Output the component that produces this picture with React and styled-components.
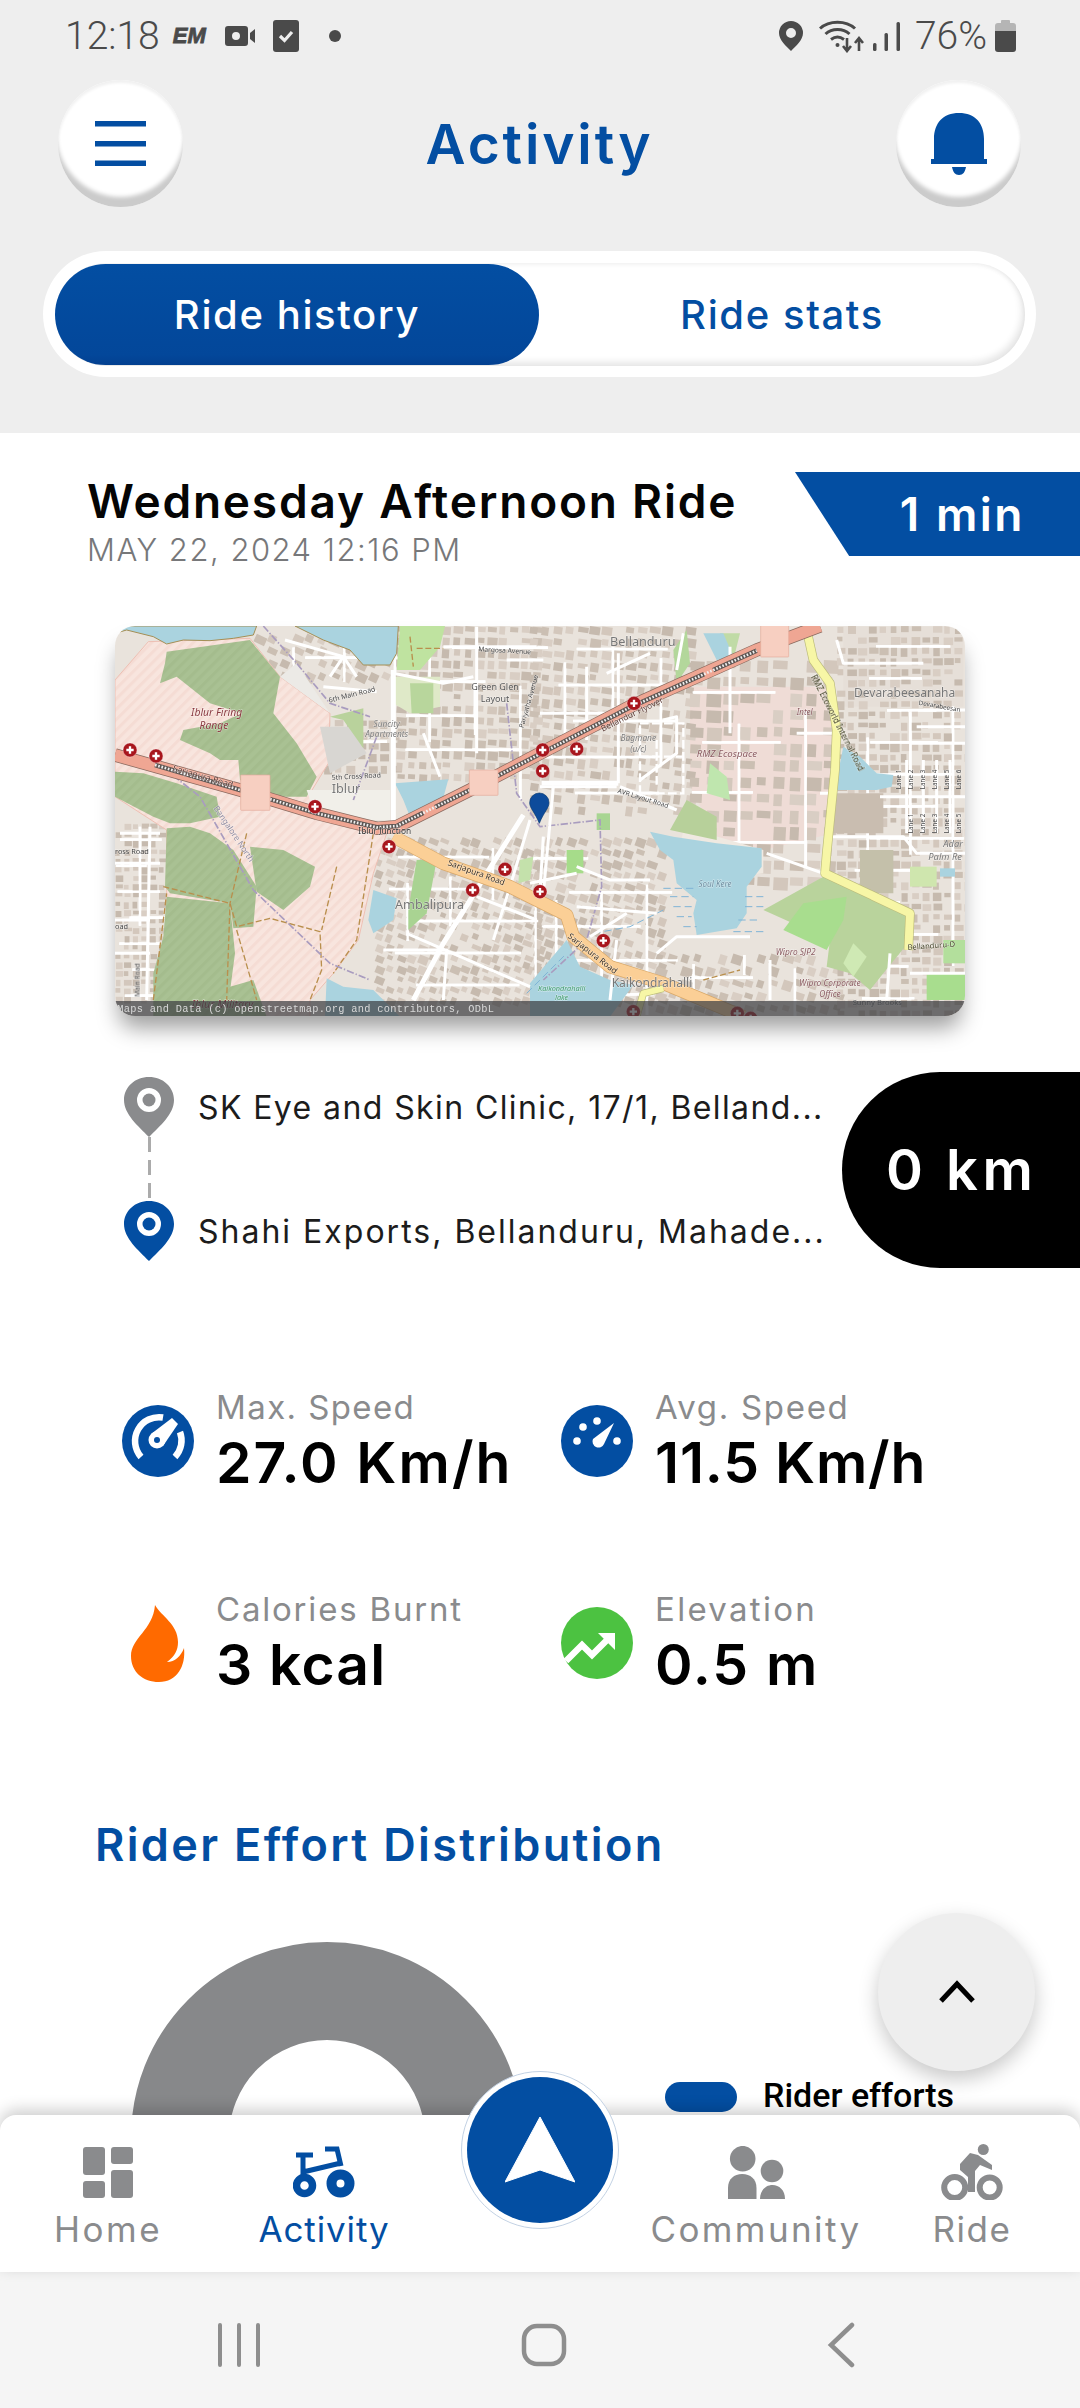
import React from 'react';
import styled, { createGlobalStyle } from 'styled-components';

const BLUE = '#034ea2';
const GREY = '#8a8b8d';
const FONT = 'Inter, "Noto Sans", sans-serif';

const GlobalStyle = createGlobalStyle`
  html, body { margin: 0; padding: 0; background: #fff; }
  * { box-sizing: border-box; }
`;

const Page = styled.div`
  position: relative;
  width: 1080px;
  height: 2408px;
  display: flex;
  flex-direction: column;
  overflow: hidden;
  font-family: ${FONT};
  background: #fff;
`;

const Top = styled.header`
  height: 433px;
  flex: none;
  background: #eee;
`;

const StatusBar = styled.div`
  height: 72px;
  display: flex;
  align-items: center;
  justify-content: space-between;
  padding: 0 64px 0 65px;
  color: #4a4a4a;
`;

const StatusGroup = styled.div`
  display: flex;
  align-items: center;
`;

const StatusItem = styled.span`
  display: flex;
  align-items: center;
  margin-left: ${p => p.$ml || 0}px;
`;

const StatusText = styled.span`
  font-family: Roboto, sans-serif;
  font-size: 39px;
  font-weight: 300;
  line-height: 40px;
`;

const EmMark = styled.span`
  font-family: "Liberation Sans", sans-serif;
  font-size: 22px;
  font-weight: 700;
  font-style: italic;
  width: 39px;
  -webkit-text-stroke: 0.8px #4a4a4a;
`;

const HeaderRow = styled.div`
  margin-top: 8px;
  height: 127px;
  padding: 0 59px 0 58px;
  display: flex;
  align-items: center;
  justify-content: space-between;
`;

const RoundButton = styled.button`
  width: 125px;
  height: 127px;
  border: 0;
  padding: 0;
  border-radius: 50%;
  background: #fff;
  display: flex;
  align-items: center;
  justify-content: center;
  box-shadow: inset 0 -12px 4px -2px #cbcbcb, inset 0 3px 3px #f1f1f1;
`;

const PageTitle = styled.h1`
  margin: 0;
  font-size: 55px;
  font-weight: 600;
  letter-spacing: 2.9px;
  line-height: 64px;
  color: ${BLUE};
`;

const Tabs = styled.div`
  margin: 44px 0 0 43px;
  width: 993px;
  height: 126px;
  padding: 12px 11px 11px 12px;
  border-radius: 63px;
  background: #fff;
`;

const TabTrack = styled.div`
  height: 103px;
  display: flex;
  border-radius: 52px;
  background: #fff;
  box-shadow: inset -3px -4px 7px rgba(0,0,0,.1), inset 0 2px 4px rgba(0,0,0,.05);
`;

const Tab = styled.div`
  width: ${p => (p.$active ? 484 : 486)}px;
  height: ${p => (p.$active ? 101 : 103)}px;
  margin-top: ${p => (p.$active ? 1 : 0)}px;
  display: flex;
  align-items: center;
  justify-content: center;
  border-radius: 51px;
  font-size: 40px;
  font-weight: 450;
  letter-spacing: 1.6px;
  color: ${p => (p.$active ? '#fff' : BLUE)};
  background: ${p => (p.$active ? 'linear-gradient(#034ea2, #03479a 90%, #034090)' : 'transparent')};
`;

const Main = styled.main`
  position: relative;
  flex: 1;
  min-height: 0;
  overflow: hidden;
  padding-top: 39px;
`;

const RideHead = styled.div`
  height: 84px;
  display: flex;
  justify-content: space-between;
`;

const RideText = styled.div`
  padding: 3px 0 0 87px;
`;

const RideName = styled.div`
  font-size: 46px;
  font-weight: 600;
  line-height: 52px;
  letter-spacing: 1.8px;
  color: #050505;
  white-space: nowrap;
`;

const RideDate = styled.div`
  margin-top: 3px;
  font-size: 31px;
  font-weight: 300;
  line-height: 40px;
  letter-spacing: 1.5px;
  color: #77787a;
  white-space: nowrap;
`;

const Duration = styled.div`
  width: 285px;
  height: 84px;
  padding-right: 55px;
  display: flex;
  align-items: center;
  justify-content: flex-end;
  background: ${BLUE};
  clip-path: polygon(0 0, 100% 0, 100% 100%, 19% 100%);
  color: #fff;
  font-size: 46px;
  font-weight: 600;
  letter-spacing: 2.5px;
`;

const MapFrame = styled.div`
  margin: 70px 0 0 115px;
  width: 850px;
  height: 390px;
  border-radius: 20px;
  box-shadow: 0 16px 22px -4px rgba(0,0,0,.38);
`;

const MapSvg = styled.svg`
  display: block;
  width: 100%;
  height: 100%;
  border-radius: 20px;
  font-family: "Noto Sans", sans-serif;
`;

const RouteRow = styled.div`
  margin-top: 56px;
  height: 196px;
  display: flex;
  justify-content: space-between;
`;

const Stops = styled.div`
  padding: 5px 0 0 124px;
`;

const Stop = styled.div`
  display: flex;
  align-items: center;
  gap: 24px;
  height: 60px;
`;

const StopText = styled.span`
  font-size: 32px;
  font-weight: 400;
  letter-spacing: ${p => p.$ls}px;
  color: #1c1c1c;
  white-space: nowrap;
`;

const StopDash = styled.div`
  height: 64px;
  margin-left: 24px;
  width: 3px;
  background: repeating-linear-gradient(to bottom, #ababab 0 15px, transparent 15px 23px);
`;

const Distance = styled.div`
  width: 238px;
  height: 196px;
  padding-left: 44px;
  display: flex;
  align-items: center;
  border-radius: 98px 0 0 98px;
  background: #000;
  color: #fff;
  font-size: 56px;
  font-weight: 600;
  letter-spacing: 4.5px;
`;

const Stats = styled.div`
  margin-top: 118px;
  padding-left: 122px;
  display: grid;
  grid-template-columns: 439px 1fr;
  row-gap: 92px;
`;

const Stat = styled.div`
  height: 110px;
  display: flex;
  align-items: center;
  gap: 22px;
`;

const StatIcon = styled.svg`
  width: 72px;
  height: 80px;
  flex: none;
`;

const StatBody = styled.div`
  margin-top: -2px;
`;

const StatLabel = styled.div`
  font-size: 33px;
  font-weight: 400;
  line-height: 44px;
  letter-spacing: ${p => p.$ls}px;
  color: ${GREY};
`;

const StatValue = styled.div`
  margin-top: 2px;
  font-size: 57px;
  font-weight: 600;
  line-height: 64px;
  letter-spacing: ${p => p.$ls}px;
  color: #000;
  white-space: nowrap;
`;

const SectionTitle = styled.h2`
  margin: 119px 0 0;
  padding-left: 95px;
  font-size: 45px;
  font-weight: 600;
  line-height: 56px;
  letter-spacing: 2.35px;
  color: ${BLUE};
`;

const ChartRow = styled.div`
  margin-top: 69px;
  padding-left: 131px;
  display: flex;
  align-items: flex-start;
`;

const Donut = styled.svg`
  width: 392px;
  height: 392px;
  flex: none;
`;

const Legend = styled.div`
  margin: 139px 0 0 142px;
  display: flex;
  align-items: center;
  gap: 26px;
`;

const LegendSwatch = styled.span`
  width: 72px;
  height: 30px;
  border-radius: 15px;
  background: ${BLUE};
`;

const LegendText = styled.span`
  font-family: Roboto, sans-serif;
  font-size: 34px;
  font-weight: 500;
  line-height: 34px;
  margin-top: -3px;
  color: #000;
  white-space: nowrap;
`;

const ScrollTop = styled.button`
  position: absolute;
  right: 45px;
  bottom: 44px;
  width: 157px;
  height: 158px;
  border: 0;
  padding: 0;
  border-radius: 50%;
  background: #eee;
  display: flex;
  align-items: center;
  justify-content: center;
  box-shadow: 0 8px 20px rgba(0,0,0,.22);
`;

const Nav = styled.nav`
  position: relative;
  z-index: 2;
  flex: none;
  height: 157px;
  display: grid;
  grid-template-columns: repeat(5, 216px);
  background: #fff;
  border-radius: 16px 16px 0 0;
  box-shadow: 0 -5px 16px rgba(0,0,0,.2);
`;

const NavItem = styled.div`
  padding-top: 29px;
  display: flex;
  flex-direction: column;
  align-items: center;
  color: ${p => (p.$active ? BLUE : GREY)};
`;

const NavIcon = styled.div`
  height: 56px;
  display: flex;
  align-items: center;
  justify-content: center;
`;

const NavLabel = styled.span`
  margin-top: 9px;
  font-size: 35px;
  font-weight: 400;
  line-height: 40px;
  letter-spacing: ${p => p.$ls}px;
`;

const GoButton = styled.div`
  position: absolute;
  top: -44px;
  left: 461px;
  width: 158px;
  height: 158px;
  padding: 5px;
  border-radius: 50%;
  background: #fff;
  border: 1px solid #c3d2e4;
  display: flex;
`;

const GoDisc = styled.div`
  flex: 1;
  border-radius: 50%;
  background: ${BLUE};
  display: flex;
  align-items: center;
  justify-content: center;
`;

const SystemNav = styled.div`
  flex: none;
  height: 136px;
  padding: 10px 8px 0 0;
  display: flex;
  align-items: center;
  justify-content: center;
  gap: 260px;
  background: #f5f5f5;
`;

// ---- status bar drawings ----
const VideoGlyph = () => (
  <svg width="30" height="20" viewBox="0 0 30 20">
    <path fill="#4a4a4a" fillRule="evenodd" d="M3 0h17a3 3 0 0 1 3 3v14a3 3 0 0 1-3 3H3a3 3 0 0 1-3-3V3a3 3 0 0 1 3-3zm8 6a4 4 0 1 0 0 8 4 4 0 0 0 0-8z" />
    <path fill="#4a4a4a" d="M25 7l5-4v14l-5-4z" />
  </svg>
);

const CheckGlyph = () => (
  <svg width="26" height="32" viewBox="0 0 26 32">
    <rect width="26" height="32" rx="3" fill="#4a4a4a" />
    <path d="M7 16l4.500 4.500L19 12" fill="none" stroke="#eee" strokeWidth="3.200" />
  </svg>
);

const DotGlyph = () => (
  <svg width="12" height="12" viewBox="0 0 12 12"><circle cx="6" cy="6" r="6" fill="#4a4a4a" /></svg>
);

const PinGlyph = () => (
  <svg width="24" height="30" viewBox="0 0 24 30">
    <path fill="#4a4a4a" fillRule="evenodd" d="M12 0a12 12 0 0 1 12 12c0 7-7 13-12 18C7 25 0 19 0 12A12 12 0 0 1 12 0zm0 7a5 5 0 1 0 0 10 5 5 0 0 0 0-10z" />
  </svg>
);

const WifiGlyph = () => (
  <svg width="45" height="33" viewBox="0 0 45 33" fill="none" stroke="#4a4a4a">
    <path d="M1 8.500C10 0 27 0 36 8.500" strokeWidth="3" />
    <path d="M6.500 14C13 8 24 8 30.500 14" strokeWidth="3" />
    <path d="M12 19.500c4-3 9-3 13 0" strokeWidth="3" />
    <circle cx="18.500" cy="25" r="2" fill="#4a4a4a" stroke="none" />
    <path d="M28 18v12M24 26l4 5 4-5" strokeWidth="2.600" />
    <path d="M40 31V19M36 23l4-5 4 5" strokeWidth="2.600" />
  </svg>
);

const SignalGlyph = () => (
  <svg width="27" height="29" viewBox="0 0 27 29" fill="#4a4a4a">
    <rect x="0" y="21" width="3.500" height="8" rx="1.500" />
    <rect x="11.500" y="11" width="3.500" height="18" rx="1.500" />
    <rect x="23.500" y="0" width="3.500" height="29" rx="1.500" />
  </svg>
);

const BatteryGlyph = () => (
  <svg width="21" height="32" viewBox="0 0 21 32">
    <path fill="#b5b5b5" d="M7 0h7a1 1 0 0 1 1 1v2h3a3 3 0 0 1 3 3v8H0V6a3 3 0 0 1 3-3h3V1a1 1 0 0 1 1-1z" />
    <path fill="#4a4a4a" d="M0 11h21v18a3 3 0 0 1-3 3H3a3 3 0 0 1-3-3z" />
  </svg>
);

const BellGlyph = () => (
  <svg width="56" height="62" viewBox="0 0 56 62" fill={BLUE}>
    <path d="M3 46V26C3 10 12 0 28 0s25 10 25 26v20h3v5H0v-5z" />
    <path d="M21 54h14c-1 5-3 8-7 8s-6-3-7-8z" />
  </svg>
);

const MenuGlyph = () => (
  <svg width="51" height="45" viewBox="0 0 51 45" fill={BLUE}>
    <rect width="51" height="5.500" />
    <rect y="20" width="51" height="5.500" />
    <rect y="39.500" width="51" height="5.500" />
  </svg>
);

// ---- map (an OSM raster in the reference, redrawn as a drawing) ----
function seeded(seed) {
  let s = seed;
  return () => {
    s = (s * 16807) % 2147483647;
    return s / 2147483647;
  };
}

const BLOCKS = [
  [15, 610, 165, 1140, 26, 0],
  [440, 40, 860, 190, 38, 25],
  [640, 300, 860, 460, 34, 0],
  [860, 18, 1300, 470, 34, 4],
  [800, 650, 1290, 1140, 32, 22],
  [1260, 18, 1740, 560, 36, 8],
  [1240, 650, 1660, 1140, 34, 20],
  [1740, 120, 2170, 800, 50, 3],
  [1640, 1000, 2180, 1188, 38, 18],
  [2180, 18, 2565, 1188, 32, 0],
];

const rnd = seeded(4711);

const BUILDINGS = [];
const BLOCK_STREETS = [];
BLOCKS.forEach(([x0, y0, x1, y1, step, angle]) => {
  const tones = ['#d3c7bc', '#cbbfb3', '#d9cec4', '#c6baae'];
  let row = 0;
  for (let y = y0; y < y1; y += step) {
    if (row % 3 === 2) {
      const from = x0 + rnd() * (x1 - x0) * 0.4;
      BLOCK_STREETS.push(`M${from} ${y - 3}H${from + (x1 - x0) * (0.35 + rnd() * 0.5)}`);
    }
    for (let x = x0; x < x1; x += step) {
      if (rnd() < 0.1) continue;
      const w = step * (0.5 + rnd() * 0.42);
      const h = step * (0.4 + rnd() * 0.42);
      BUILDINGS.push({ x: x + rnd() * 3, y: y + rnd() * 3, w, h, angle, fill: tones[Math.floor(rnd() * tones.length)] });
    }
    row += 1;
  }
  for (let x = x0 + step * 3; x < x1; x += step * 4) {
    const from = y0 + rnd() * (y1 - y0) * 0.4;
    BLOCK_STREETS.push(`M${x - 3} ${from}V${from + (y1 - y0) * (0.3 + rnd() * 0.5)}`);
  }
});

// thin white streets, in coordinates of the map at 3x
const STREETS = [
  'M850 150V620', 'M850 160L1000 190L1090 170', 'M1000 80H1280', 'M1100 20V400', 'M1190 120H1300',
  'M940 340L990 470', 'M640 200L800 215', 'M525 60L700 110L740 170', 'M700 110L660 170',
  'M1240 585L1130 760L1000 970L910 1140', 'M1260 600L1200 800L1150 960', 'M890 940L1120 1040L1260 1100',
  'M820 990H1010L1000 1140', 'M1300 650L1290 815', 'M1100 830L1280 900',
  'M30 640H150', 'M15 730H150', 'M15 900H120', 'M15 1000H120', 'M120 620L110 1140',
  'M1290 500H1520', 'M1525 100V490', 'M1290 280H1540', 'M1430 140V360', 'M1490 160L1620 100',
  'M1660 300L1700 290V400L1590 480', 'M1530 500L1700 570', 'M1330 500L1300 820', 'M1400 740L1500 780H1620',
  'M1260 790L1400 760', 'M1400 860L1640 880', 'M1440 950L1550 880', 'M1520 960L1500 1140', 'M1640 1000L1700 950H1920',
  'M1970 700L2140 760', 'M2160 650H2380L2420 700H2565', 'M2310 530H2565', 'M2180 60L2200 130H2440',
  'M2340 1000L2330 1140', 'M2400 1060H2565', 'M2440 270H2565', 'M2420 320H2565', 'M2400 370H2565',
  'M2390 420V640', 'M2440 420V640', 'M2480 420V640', 'M2520 420V640', 'M2060 340H2170', 'M1860 80V340',
  'M1720 40L1700 150', 'M1980 1020V1140', 'M2130 520L2170 520',
];

const RED_MARKS = [
  [60, 390], [138, 408], [615, 560], [837, 680], [1185, 748], [1088, 810], [1298, 390], [1298, 453], [1290, 815],
  [1572, 250], [1400, 387], [1480, 962], [1570, 1175], [1882, 1180], [1922, 1195],
];

const Road = ({ d, casing, fill, w }) => (
  <>
    <path d={d} fill="none" stroke={casing} strokeWidth={w + 4} strokeLinejoin="round" />
    <path d={d} fill="none" stroke={fill} strokeWidth={w} strokeLinejoin="round" />
  </>
);

const Label = ({ x, y, size = 28, color = '#555', italic, rotate, anchor = 'start', children }) => (
  <text
    x={x}
    y={y}
    fontSize={size}
    fill={color}
    fontStyle={italic ? 'italic' : 'normal'}
    textAnchor={anchor}
    transform={rotate ? `rotate(${rotate} ${x} ${y})` : undefined}
    stroke="#fff"
    strokeOpacity=".55"
    strokeWidth="2.500"
    paintOrder="stroke"
  >
    {children}
  </text>
);

const Shield = ({ x, y, w, lines }) => (
  <g>
    <rect x={x} y={y} width={w} height={lines.length * 30 + 16} fill="#f7cfc1" stroke="#e4ab9c" strokeWidth="2" rx="2" />
    {lines.map((l, i) => (
      <text key={l} x={x + w / 2} y={y + 32 + i * 30} fontSize="26" fill="#7e4034" textAnchor="middle">{l}</text>
    ))}
  </g>
);

const RouteMap = () => (
  <MapSvg viewBox="15 18 2550 1170">
    <defs>
      <pattern id="hatch" width="22" height="22" patternUnits="userSpaceOnUse" patternTransform="rotate(-45)">
        <rect width="22" height="22" fill="#f8e5de" />
        <rect width="22" height="9" fill="#f5dcd4" />
      </pattern>
      <pattern id="hatchGreen" width="22" height="22" patternUnits="userSpaceOnUse" patternTransform="rotate(-45)">
        <rect width="22" height="22" fill="#a9c193" />
        <rect width="22" height="9" fill="#a4bc8d" />
      </pattern>
      <filter id="soft"><feGaussianBlur stdDeviation="1.600" /></filter>
    </defs>
    <g filter="url(#soft)">
      <rect x="0" y="0" width="2600" height="1200" fill="#e9e3dc" />
      {/* commercial and open land */}
      <path d="M1740 200H2170V640L1960 690L1820 650L1740 500Z" fill="#efdcd6" />
      <path d="M2200 20H2560V260H2200Z" fill="#e6dfd8" />
      <path d={BLOCK_STREETS.join(' ')} fill="none" stroke="#fff" strokeWidth="8" />
      {BUILDINGS.map((b, i) => (
        <rect key={i} x={b.x} y={b.y} width={b.w} height={b.h} fill={b.fill} transform={`rotate(${b.angle} ${b.x} ${b.y})`} />
      ))}
      <path d={BLOCK_STREETS.join(' ')} fill="none" stroke="#fff" strokeWidth="7" />

      {/* military land with its woods */}
      <path d="M15 180L115 65L420 55L510 170L660 280L655 430L600 520L620 575L830 640L790 760L745 960L670 1060L600 1140V1190H170V630L15 530V350Z" fill="url(#hatch)" stroke="#eec0b4" strokeWidth="3" />
      <path d="M170 95L420 60L510 170L490 280L560 370L620 470L590 530L480 530L390 480L385 420L330 420L300 400L210 360L220 330L330 310L395 280L300 250L200 170L150 190L165 130Z" fill="url(#hatchGreen)" />
      <path d="M15 455L100 460L200 490L320 530L330 590L240 610L180 610L130 590L15 530Z" fill="url(#hatchGreen)" />
      <path d="M170 625L240 620L300 640L370 690L440 800L430 920L370 925L360 850L180 820L165 800Z" fill="url(#hatchGreen)" />
      <path d="M420 680L520 690L615 740L600 800L520 870L440 815Z" fill="url(#hatchGreen)" />
      <path d="M170 830L360 850L375 1000L350 1190H130V1060L160 950Z" fill="url(#hatchGreen)" />
      <path d="M360 1100L430 1080L470 1190H350Z" fill="url(#hatchGreen)" />
      <path d="M510 170L660 280L640 250L560 130Z" fill="#eceae6" />
      <path d="M630 320H720L770 400L660 460Z" fill="#d8d6d2" />
      <path d="M660 290L760 265V385L700 300Z" fill="#b9d29c" />
      <path d="M590 510H840V600H620Z" fill="#f1efe9" />

      {/* parks */}
      <path d="M870 18H1005L990 80L930 150H860Z" fill="#bfe3a0" />
      <path d="M850 170H990V260L900 280L850 250Z" fill="#dfe9c8" />
      <path d="M900 190H970V280H905Z" fill="#b8d69c" />
      <path d="M920 720L980 720L950 880L895 930L895 870Z" fill="#a9d392" />
      <path d="M1230 720L1270 710L1260 780L1225 790Z" fill="#c4e1ab" />
      <path d="M1720 620L1960 690V760L1700 790Z" fill="#efe9e1" />
      <path d="M1680 630L1730 540L1820 590L1820 660Z" fill="#b7d09a" />
      <path d="M1370 690L1420 690L1420 760L1370 760Z" fill="#a6dc8a" />
      <path d="M1460 580H1500V630H1460Z" fill="#a8d592" />
      <path d="M1690 90L1730 30L1740 130L1700 190Z" fill="#b3d79b" />
      <path d="M1830 40H1890L1870 120L1820 110Z" fill="#c0dba6" />
      <path d="M1960 870L2140 770L2400 880L2385 980L2320 1060L2280 1110L2220 1060L2150 1040L2160 960Z" fill="#b9d39c" />
      <path d="M2080 850L2210 830L2200 900L2150 990L2020 930Z" fill="#a8dd8e" />
      <path d="M1800 430L1850 470L1860 540L1790 520Z" fill="#bfe6ae" />
      <path d="M2230 970L2270 1010L2230 1070L2200 1030Z" fill="#cfe9b4" />
      <path d="M2450 1060H2565V1140H2450Z" fill="#a8dd8e" />
      <path d="M2500 960H2565V1030H2500Z" fill="#b3df9c" />
      <path d="M2400 740H2480V800H2400Z" fill="#cfe6ae" />
      <path d="M2250 690H2350V820H2250Z" fill="#c4c0aa" />
      <path d="M2170 520H2320V640H2170Z" fill="#c9bdb0" />

      {/* water */}
      <g fill="#aad3df" stroke="#a58f55" strokeWidth="3">
        <path d="M15 18H440L430 45L370 55L300 62L220 60L170 72L130 50L50 30L15 40Z" />
        <path d="M555 18H865L860 100L840 135H760L720 90L640 60Z" />
      </g>
      <g fill="#aad3df">
        <path d="M855 490L1015 478L990 570L900 590L880 540Z" />
        <path d="M790 810L860 835L850 900L790 940L775 900Z" />
        <path d="M645 1190L650 1075L700 1100L790 1110L870 1190Z" />
        <path d="M1260 1090L1370 960L1410 1040L1500 1080L1570 1095L1500 1190H1260Z" />
        <path d="M1620 635L1690 650L1820 670L1955 685L1955 740L1910 800L1910 880L1880 925L1760 945L1750 880L1760 840L1700 790L1690 720L1650 690Z" />
        <path d="M2200 380L2250 410L2300 460L2350 465L2345 500L2300 510L2180 510L2190 430Z" />
        <path d="M1780 40L1840 40L1870 110L1820 120Z" />
        <path d="M2490 745H2535V770H2490Z" />
      </g>
      <g stroke="#7fb4d6" strokeWidth="3" strokeDasharray="22 12" fill="none">
        <path d="M1660 805H1750M1680 830H1750M1690 860H1745M1700 890H1745M1720 920H1760" />
        <path d="M1905 830H1960M1905 860H1960M1885 900H1950M1870 935H1960" />
        <path d="M1250 1120L1370 1000M1450 940L1560 920L1660 870" />
      </g>

      {/* tracks and boundaries */}
      <g fill="none" stroke="#b98f4d" strokeWidth="4" strokeDasharray="18 8">
        <path d="M160 800L360 850L380 920L480 895L630 935L635 1050L600 1140" />
        <path d="M130 1140L170 820" />
        <path d="M380 930L440 1140" />
        <path d="M410 640L360 850L350 1140" />
        <path d="M680 740L635 930" />
        <path d="M790 640L740 960L670 1060" />
        <path d="M900 50L910 140M920 85H1000" />
        <path d="M1780 1080L1890 1050" />
      </g>
      <path d="M460 18L560 130L660 250L780 290M130 420L270 530L430 810L660 1030L780 1080M800 350L730 540M1190 250L1220 520L1290 620L1470 600L1475 800L1430 960L1300 1080" fill="none" stroke="#a99cbf" strokeWidth="5" strokeDasharray="22 6 4 6" />

      {/* streets */}
      <path d={STREETS.join(' ')} fill="none" stroke="#fff" strokeWidth="9" strokeLinejoin="round" />
      <path d="M1240 585L1130 760L1000 970L910 1140M850 150V620M1295 490H1525" fill="none" stroke="#fff" strokeWidth="15" />
      <path d="M1590 310H1720V520H1590ZM1640 360V500M1590 410H1720" fill="none" stroke="#fff" strokeWidth="7" strokeDasharray="26 10" />

      {/* main roads */}
      <Road d="M850 650L1000 730L1200 800L1320 860L1370 885L1390 950L1500 1040L1660 1090L1780 1140L1900 1190" casing="#d9a868" fill="#fbcf96" w={36} />
      <Road d="M2090 30L2110 120L2160 190L2180 330L2175 450L2150 700L2145 760L2400 880L2395 990" casing="#bcbc7c" fill="#f7f6a6" w={24} />
      <Road d="M1580 1190L1600 1120L1660 1105" casing="#bcbc7c" fill="#f7f6a6" w={18} />
      <Road d="M15 405L390 510L620 580L800 625L860 620L1080 510L1290 400L1560 260L1940 90L2130 18" casing="#8a6a5f" fill="#efa693" w={36} />
      <path d="M135 435L390 510L620 580L800 622L860 618L1080 510L1290 402L1560 262L1940 92" fill="none" stroke="#5c5552" strokeWidth="14" strokeDasharray="300 60 480 40 900 30 900" />
      <path d="M135 435L390 510L620 580L800 622L860 618L1080 510L1290 402L1560 262L1940 92" fill="none" stroke="#eee" strokeWidth="8" strokeDasharray="5 5" />

      {/* labels */}
      <Label x="320" y="288" size="31" italic color="#8a3a40" anchor="middle">Iblur Firing</Label>
      <Label x="312" y="328" size="31" italic color="#8a3a40" anchor="middle">Range</Label>
      <Label x="187" y="452" size="26" color="#5b3a34" rotate="16">Sarjapura Road</Label>
      <Label x="658" y="248" size="21" color="#444" rotate="-14">6th Main Road</Label>
      <Label x="830" y="320" size="25" italic color="#7b7b7b" anchor="middle">Suncity</Label>
      <Label x="830" y="352" size="25" italic color="#7b7b7b" anchor="middle">Apartments</Label>
      <Label x="665" y="480" size="21" color="#444" rotate="-3">5th Cross Road</Label>
      <Label x="708" y="520" size="38" color="#777" anchor="middle">Iblur</Label>
      <Label x="745" y="642" size="25" color="#333">Iblur Junction</Label>
      <Label x="1012" y="735" size="25" color="#3d3021" rotate="20">Sarjapura Road</Label>
      <Label x="855" y="868" size="38" color="#777">Ambalipura</Label>
      <Label x="310" y="565" size="25" color="#8f8a9f" rotate="56">Bangalore North</Label>
      <Label x="1105" y="94" size="20" color="#444" rotate="3">Margosa Avenue</Label>
      <Label x="1155" y="210" size="27" color="#555" anchor="middle">Green Glen</Label>
      <Label x="1155" y="245" size="27" color="#555" anchor="middle">Layout</Label>
      <Label x="1240" y="325" size="20" color="#444" rotate="-74">Pariyatha Avenue</Label>
      <Label x="15" y="702" size="22" color="#444">ross Road</Label>
      <Label x="15" y="926" size="22" color="#444">oad</Label>
      <Label x="90" y="1130" size="20" color="#444" rotate="-90">Main Road</Label>
      <Label x="245" y="1163" size="32" italic color="#8a3a40">Iblur Military</Label>
      <Label x="1500" y="78" size="38" color="#777">Bellanduru</Label>
      <Label x="1478" y="335" size="25" color="#5b3a34" rotate="-26">Bellandur Flyover</Label>
      <Label x="1585" y="362" size="25" italic color="#7b7b7b" anchor="middle">Bagmane</Label>
      <Label x="1585" y="396" size="25" italic color="#7b7b7b" anchor="middle">(u/c)</Label>
      <Label x="1760" y="412" size="29" italic color="#8a5a60">RMZ Ecospace</Label>
      <Label x="1522" y="518" size="20" color="#444" rotate="17">AVR Layout Road</Label>
      <Label x="2060" y="285" size="24" italic color="#8a5a60">Intel</Label>
      <Label x="2103" y="170" size="24" color="#3f3f22" rotate="63">RMZ Ecoworld Internal Road</Label>
      <Label x="2232" y="232" size="36" color="#777">Devarabeesanaha</Label>
      <Label x="2425" y="254" size="19" color="#444" rotate="10">Devarabeesan</Label>
      <Label x="1815" y="800" size="24" italic color="#6c8da0" anchor="middle">Soul Kere</Label>
      <Label x="1372" y="952" size="25" color="#3d3021" rotate="38">Sarjapura Road</Label>
      <Label x="1505" y="1100" size="36" color="#777">Kaikondrahalli</Label>
      <Label x="1355" y="1113" size="22" italic color="#3c9a6a" anchor="middle">Kaikondrahalli</Label>
      <Label x="1355" y="1140" size="22" italic color="#3c9a6a" anchor="middle">lake</Label>
      <Label x="1997" y="1004" size="25" italic color="#8a5a60">Wipro SJP2</Label>
      <Label x="2160" y="1098" size="25" italic color="#8a5a60" anchor="middle">Wipro Corporate</Label>
      <Label x="2160" y="1132" size="25" italic color="#8a5a60" anchor="middle">Office</Label>
      <Label x="2228" y="1156" size="23" color="#666">Sunny Brooks</Label>
      <Label x="2393" y="990" size="23" color="#3f3f22" rotate="-4">Bellanduru-D</Label>
      <Label x="2500" y="682" size="28" italic color="#777">Adar</Label>
      <Label x="2455" y="720" size="28" italic color="#777">Palm Re</Label>
      {['Lane 1', 'Lane 2', 'Lane 3', 'Lane 4', 'Lane 5'].map((l, i) => (
        <Label key={l} x={2408 + i * 36} y="640" size="19" color="#444" rotate="-90">{l}</Label>
      ))}
      {['Lane 1', 'Lane 2', 'Lane 3', 'Lane 4', 'Lane 5', 'Lane 6'].map((l, i) => (
        <Label key={l + 'n'} x={2372 + i * 36} y="508" size="19" color="#444" rotate="-90">{l}</Label>
      ))}

      <Shield x="392" y="465" w={88} lines={['NH44', 'NH48', 'ORR']} />
      <Shield x="1078" y="450" w={86} lines={['NH44', 'NH48']} />
      <Shield x="1952" y="5" w={84} lines={['NH44', 'NH48', 'ORR']} />

      {RED_MARKS.map(([x, y]) => (
        <g key={`${x}-${y}`}>
          <circle cx={x} cy={y} r="21" fill="#a8141f" stroke="#fff" strokeOpacity=".5" strokeWidth="2" />
          <path d={`M${x - 11} ${y}h22M${x} ${y - 11}v22`} stroke="#fff" strokeWidth="7" />
        </g>
      ))}
      <path d="M1288 610C1274 575 1259 565 1259 548a29 29 0 0 1 58 0C1317 565 1302 575 1288 610Z" fill="#0b4c9b" stroke="#06376f" strokeWidth="2" />
    </g>
    <rect x="15" y="1143" width="2550" height="45" fill="#3d3f42" fillOpacity=".72" />
    <text x="22" y="1177" fontSize="31" fontFamily="Liberation Mono, monospace" fill="#d8d8d8" textLength="1130">Maps and Data (c) openstreetmap.org and contributors, ODbL</text>
  </MapSvg>
);

const LocationPin = ({ color }) => (
  <svg width="50" height="60" viewBox="0 0 50 60">
    <path fill={color} fillRule="evenodd" d="M25 0c14 0 25 10 25 23 0 14-14 26-25 37C14 49 0 37 0 23 0 10 11 0 25 0zm0 11a12 12 0 1 0 0 24 12 12 0 0 0 0-24z" />
    <circle cx="25" cy="23" r="6.500" fill={color} />
  </svg>
);

const TopSpeedIcon = () => (
  <StatIcon viewBox="0 -4 72 80">
    <circle cx="36" cy="36" r="36" fill={BLUE} />
    <g fill="none" stroke="#fff" strokeWidth="6.500">
      <path d="M19 52A24 24 0 0 1 41 12.500" />
      <path d="M53 52A24 24 0 0 0 58 27" />
    </g>
    <path d="M29 29L50 13L56 19L41 41Z" fill="#fff" />
    <circle cx="35" cy="35" r="8.500" fill="#fff" />
    <circle cx="35" cy="35" r="3" fill={BLUE} />
  </StatIcon>
);

const AvgSpeedIcon = () => (
  <StatIcon viewBox="0 -4 72 80">
    <circle cx="36" cy="36" r="36" fill={BLUE} />
    <g fill="#fff">
      <circle cx="22" cy="22" r="3.800" />
      <circle cx="36" cy="16" r="3.800" />
      <circle cx="16" cy="36" r="3.800" />
      <circle cx="56" cy="36" r="3.800" />
      <path d="M53 18L43 39A5.800 5.800 0 0 1 32 34Z" />
    </g>
  </StatIcon>
);

const FlameIcon = () => (
  <StatIcon viewBox="-9 -1 72 80">
    <path d="M24 1C30 12 47 20 47 38C47 46 44 52 36 58C44 58 50 52 53 44C55 62 46 78 28 78C12 78 0 68 0 52C0 34 22 26 24 1Z" fill="#ff6a00" />
  </StatIcon>
);

const ElevationIcon = () => (
  <StatIcon viewBox="0 -4 72 80">
    <circle cx="36" cy="36" r="36" fill="#4cc241" />
    <path d="M5 54L21 38L31 48L48 31" fill="none" stroke="#fff" strokeWidth="6.500" />
    <path d="M37 26H54V43Z" fill="#fff" />
  </StatIcon>
);

const HomeIcon = () => (
  <svg width="50" height="51" viewBox="0 0 50 51" fill={GREY}>
    <rect width="22" height="28" rx="3" />
    <rect x="28" width="22" height="17" rx="3" />
    <rect x="28" y="23" width="22" height="28" rx="3" />
    <rect y="34" width="22" height="17" rx="3" />
  </svg>
);

const ActivityIcon = () => (
  <svg width="62" height="52" viewBox="0 0 62 52">
    <g fill="none" stroke={BLUE} strokeWidth="5">
      <path d="M3 9H20M10 9V26L48 17M32 3H44L48 20" />
    </g>
    <circle cx="11.500" cy="39.500" r="8" fill="none" stroke={BLUE} strokeWidth="7.500" />
    <circle cx="47.500" cy="37.500" r="9" fill="none" stroke={BLUE} strokeWidth="10" />
  </svg>
);

const CommunityIcon = () => (
  <svg width="57" height="53" viewBox="0 0 57 53" fill={GREY}>
    <circle cx="14.700" cy="12.700" r="12.800" />
    <path d="M0 53V42C0 33 6 28 14.200 28S28.500 33 28.500 42V53Z" />
    <circle cx="44" cy="25" r="11.300" />
    <path d="M32 53C32 44 38 39 44.500 39S57 44 57 53Z" />
  </svg>
);

const RideIcon = () => (
  <svg width="62" height="56" viewBox="0 0 62 56">
    <circle cx="42.300" cy="5.500" r="5.500" fill={GREY} />
    <path d="M19 20L29 9L37 11L51 21V26L39 21L34 27V48H27V33L19 26Z" fill={GREY} />
    <circle cx="13.700" cy="43.500" r="10.500" fill="none" stroke={GREY} strokeWidth="6" />
    <circle cx="48.700" cy="43.500" r="10" fill="none" stroke={GREY} strokeWidth="6" />
  </svg>
);

const STATS = [
  { label: 'Max. Speed', labelLs: 1.4, value: '27.0 Km/h', valueLs: 2.1, Icon: TopSpeedIcon },
  { label: 'Avg. Speed', labelLs: 1.7, value: '11.5 Km/h', valueLs: 0.8, Icon: AvgSpeedIcon },
  { label: 'Calories Burnt', labelLs: 1.8, value: '3 kcal', valueLs: 1.2, Icon: FlameIcon },
  { label: 'Elevation', labelLs: 2.3, value: '0.5 m', valueLs: 1.8, Icon: ElevationIcon },
];

export default function App() {
  return (
    <Page>
      <GlobalStyle />
      <Top>
        <StatusBar>
          <StatusGroup>
            <StatusText>12:18</StatusText>
            <StatusItem $ml={13}><EmMark>EM</EmMark></StatusItem>
            <StatusItem $ml={13}><VideoGlyph /></StatusItem>
            <StatusItem $ml={18}><CheckGlyph /></StatusItem>
            <StatusItem $ml={30}><DotGlyph /></StatusItem>
          </StatusGroup>
          <StatusGroup>
            <PinGlyph />
            <StatusItem $ml={16}><WifiGlyph /></StatusItem>
            <StatusItem $ml={9}><SignalGlyph /></StatusItem>
            <StatusItem $ml={15}><StatusText>76%</StatusText></StatusItem>
            <StatusItem $ml={8}><BatteryGlyph /></StatusItem>
          </StatusGroup>
        </StatusBar>
        <HeaderRow>
          <RoundButton aria-label="menu"><MenuGlyph /></RoundButton>
          <PageTitle>Activity</PageTitle>
          <RoundButton aria-label="notifications"><BellGlyph /></RoundButton>
        </HeaderRow>
        <Tabs>
          <TabTrack>
            <Tab $active>Ride history</Tab>
            <Tab>Ride stats</Tab>
          </TabTrack>
        </Tabs>
      </Top>

      <Main>
        <RideHead>
          <RideText>
            <RideName>Wednesday Afternoon Ride</RideName>
            <RideDate>MAY 22, 2024 12:16 PM</RideDate>
          </RideText>
          <Duration>1 min</Duration>
        </RideHead>

        <MapFrame><RouteMap /></MapFrame>

        <RouteRow>
          <Stops>
            <Stop>
              <LocationPin color="#8a8b8d" />
              <StopText $ls={1.4}>SK Eye and Skin Clinic, 17/1, Belland...</StopText>
            </Stop>
            <StopDash />
            <Stop>
              <LocationPin color={BLUE} />
              <StopText $ls={2}>Shahi Exports, Bellanduru, Mahade...</StopText>
            </Stop>
          </Stops>
          <Distance>0 km</Distance>
        </RouteRow>

        <Stats>
          {STATS.map(({ label, labelLs, value, valueLs, Icon }) => (
            <Stat key={label}>
              <Icon />
              <StatBody>
                <StatLabel $ls={labelLs}>{label}</StatLabel>
                <StatValue $ls={valueLs}>{value}</StatValue>
              </StatBody>
            </Stat>
          ))}
        </Stats>

        <SectionTitle>Rider Effort Distribution</SectionTitle>
        <ChartRow>
          <Donut viewBox="0 0 392 392">
            <circle cx="196" cy="196" r="147" fill="none" stroke="#87888a" strokeWidth="98" />
          </Donut>
          <Legend>
            <LegendSwatch />
            <LegendText>Rider efforts</LegendText>
          </Legend>
        </ChartRow>

        <ScrollTop aria-label="scroll to top">
          <svg width="38" height="24" viewBox="0 0 38 24">
            <path d="M3 21L19 4L35 21" fill="none" stroke="#000" strokeWidth="5" />
          </svg>
        </ScrollTop>
      </Main>

      <Nav>
        <NavItem>
          <NavIcon><HomeIcon /></NavIcon>
          <NavLabel $ls={2.5}>Home</NavLabel>
        </NavItem>
        <NavItem $active>
          <NavIcon><ActivityIcon /></NavIcon>
          <NavLabel $ls={0.9}>Activity</NavLabel>
        </NavItem>
        <div />
        <NavItem>
          <NavIcon><CommunityIcon /></NavIcon>
          <NavLabel $ls={2.4}>Community</NavLabel>
        </NavItem>
        <NavItem>
          <NavIcon><RideIcon /></NavIcon>
          <NavLabel $ls={1.6}>Ride</NavLabel>
        </NavItem>
        <GoButton>
          <GoDisc>
            <svg width="70" height="66" viewBox="0 0 70 66">
              <path d="M35 0L70 65L35 53L0 65Z" fill="#fff" stroke="#fff" strokeLinejoin="round" />
            </svg>
          </GoDisc>
        </GoButton>
      </Nav>

      <SystemNav>
        <svg width="44" height="44" viewBox="0 0 44 44" stroke="#8e8e8e" strokeWidth="4" strokeLinecap="round">
          <path d="M3 2V42M22 2V42M41 2V42" />
        </svg>
        <svg width="46" height="44" viewBox="0 0 46 44" fill="none" stroke="#8e8e8e" strokeWidth="4.500">
          <rect x="3" y="3" width="40" height="38" rx="13" />
        </svg>
        <svg width="28" height="46" viewBox="0 0 28 46" fill="none" stroke="#8e8e8e" strokeWidth="4.500" strokeLinecap="round">
          <path d="M25 3L4 23L25 43" />
        </svg>
      </SystemNav>
    </Page>
  );
}
